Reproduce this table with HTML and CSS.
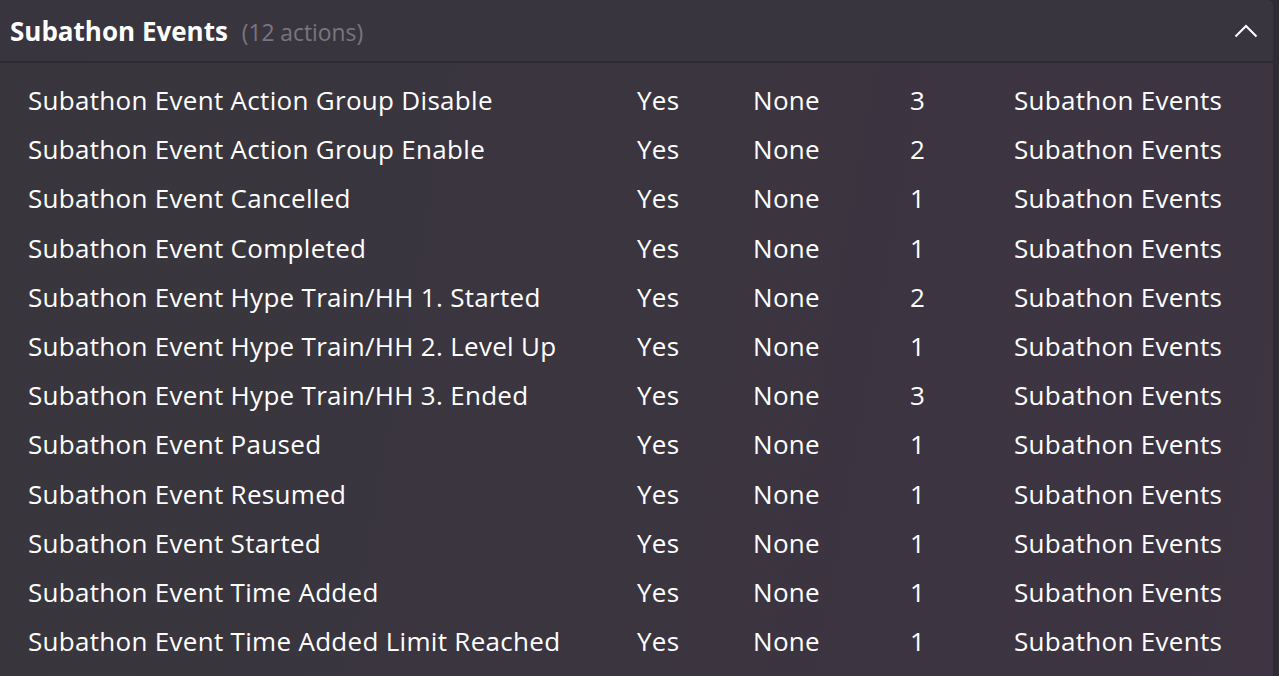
FILE: index.html
```html
<!DOCTYPE html>
<html>
<head>
<meta charset="utf-8">
<link rel="stylesheet" href="styles.css">
</head>
<body>
<div class="page">
  <section class="panel">
    <header class="panel-head">
      <h2 class="title">Subathon Events <span class="count">(12 actions)</span></h2>
      <svg class="chevron" width="24" height="14" viewBox="0 0 24 14"><path d="M1.5 12.5 L12 2 L22.5 12.5" fill="none" stroke="#ffffff" stroke-width="2"/></svg>
    </header>
    <div class="rows">
      <div class="row"><span>Subathon Event Action Group Disable</span><span>Yes</span><span>None</span><span>3</span><span>Subathon Events</span></div>
      <div class="row"><span>Subathon Event Action Group Enable</span><span>Yes</span><span>None</span><span>2</span><span>Subathon Events</span></div>
      <div class="row"><span>Subathon Event Cancelled</span><span>Yes</span><span>None</span><span>1</span><span>Subathon Events</span></div>
      <div class="row"><span>Subathon Event Completed</span><span>Yes</span><span>None</span><span>1</span><span>Subathon Events</span></div>
      <div class="row"><span>Subathon Event Hype Train/HH 1. Started</span><span>Yes</span><span>None</span><span>2</span><span>Subathon Events</span></div>
      <div class="row"><span>Subathon Event Hype Train/HH 2. Level Up</span><span>Yes</span><span>None</span><span>1</span><span>Subathon Events</span></div>
      <div class="row"><span>Subathon Event Hype Train/HH 3. Ended</span><span>Yes</span><span>None</span><span>3</span><span>Subathon Events</span></div>
      <div class="row"><span>Subathon Event Paused</span><span>Yes</span><span>None</span><span>1</span><span>Subathon Events</span></div>
      <div class="row"><span>Subathon Event Resumed</span><span>Yes</span><span>None</span><span>1</span><span>Subathon Events</span></div>
      <div class="row"><span>Subathon Event Started</span><span>Yes</span><span>None</span><span>1</span><span>Subathon Events</span></div>
      <div class="row"><span>Subathon Event Time Added</span><span>Yes</span><span>None</span><span>1</span><span>Subathon Events</span></div>
      <div class="row"><span>Subathon Event Time Added Limit Reached</span><span>Yes</span><span>None</span><span>1</span><span>Subathon Events</span></div>
    </div>
  </section>
</div>
</body>
</html>
```
FILE: styles.css
```css
html, body {
  margin: 0;
  padding: 0;
  background: #2f2b34;
  height: 100%;
  overflow: hidden;
}
.page {
  width: 1279px;
  height: 676px;
  display: flex;
}
.panel {
  width: 1273px;
  height: 676px;
  background: linear-gradient(100deg, #38363c 0%, #3b3540 55%, #3e3443 100%);
  border-top-right-radius: 6px;
  font-family: "Open Sans", "Noto Sans", sans-serif;
  color: #ffffff;
}
.panel-head {
  height: 61px;
  border-bottom: 2px solid #2d2a31;
  background: #39353e;
  border-top-right-radius: 6px;
  display: flex;
  align-items: center;
  justify-content: space-between;
  padding: 0 15px 0 10px;
}
.title {
  margin: 0;
  font-size: 26px;
  font-weight: 700;
  letter-spacing: 0;
  color: #ffffff;
}
.count {
  font-weight: 400;
  font-size: 22.8px;
  color: #7a7580;
  margin-left: 7px;
}
.chevron {
  display: block;
}
.rows {
  padding-top: 12.5px;
}
.row {
  display: grid;
  grid-template-columns: 609px 116px 157px 104px 1fr;
  padding-left: 28px;
  height: 49.2px;
  align-items: center;
  font-size: 26px;
  letter-spacing: 0.3px;
  color: #ffffff;
}
```
